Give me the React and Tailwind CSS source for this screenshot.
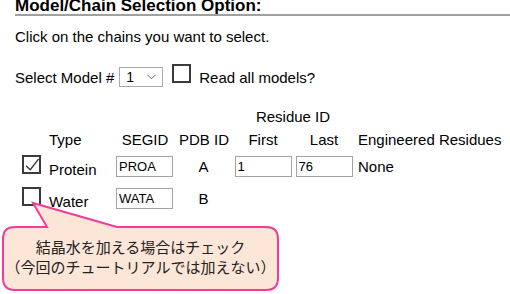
import React from "react";

const cols = "grid grid-cols-[27px_67px_58px_60px_58px_64px_1fr] items-center";

const Box = ({ checked }) => (
  <div className="w-[19px] h-[19px] border-2 border-[#3a3a3a] bg-white">
    {checked && (
      <svg width="15" height="15" viewBox="0 0 15 15" className="block">
        <path d="M2 8.7 L6.3 12.7 L14.6 2" fill="none" stroke="#333" strokeWidth="1.3" />
      </svg>
    )}
  </div>
);

const Field = ({ value }) => (
  <input
    readOnly
    value={value}
    className="w-[57px] h-[21px] border border-[#a3a3a3] bg-white px-[2px] text-[13px] text-black outline-none font-['Liberation_Sans',Arial,sans-serif]"
  />
);

const chains = [
  { type: "Protein", seg: "PROA", pdb: "A", first: "1", last: "76", eng: "None", checked: true },
  { type: "Water", seg: "WATA", pdb: "B", checked: false },
];

export default function App() {
  return (
    <div className="relative w-[510px] h-[294px] overflow-hidden bg-white text-black text-[15px] leading-[17px] font-['Liberation_Sans',Arial,sans-serif]">
      <div className="pl-[15px]">
        <h2 className="mt-[-3px] font-bold text-[17px] leading-[17px] border-b-2 border-[#a0a0a0]">
          Model/Chain Selection Option:
        </h2>
        <p className="mt-[12px]">Click on the chains you want to select.</p>

        <div className="mt-[19px] flex items-start h-[23px]">
          <span className="mt-[5px]">Select Model #</span>
          <div className="ml-[5px] mt-[3px] w-[44px] h-[20px] border border-[#a9a9a9] flex items-center justify-between pl-[6px] pr-[6px] text-[14px]">
            <span>1</span>
            <svg width="9" height="6" viewBox="0 0 9 6">
              <path d="M0.5 0.8 L4.5 4.8 L8.5 0.8" fill="none" stroke="#666" strokeWidth="1" />
            </svg>
          </div>
          <div className="ml-[9px]">
            <Box />
          </div>
          <span className="ml-[8px] mt-[5px]">Read all models?</span>
        </div>
      </div>

      <div className="pl-[22px] mt-[18px]">
        <div className={`${cols} h-[23px]`}>
          <div className="col-start-5 col-span-2 text-center pr-[4px]">Residue ID</div>
        </div>
        <div className={`${cols} h-[22px]`}>
          <div />
          <div>Type</div>
          <div className="text-center">SEGID</div>
          <div className="text-center">PDB ID</div>
          <div className="text-center">First</div>
          <div className="text-center">Last</div>
          <div className="pl-[2px]">Engineered Residues</div>
        </div>
        {chains.map((c, i) => (
          <div key={c.seg} className={`${cols} h-[25px] ${i === 0 ? "mt-[4px]" : "mt-[7px]"}`}>
            <div className="self-start mt-[1px]">
              <Box checked={c.checked} />
            </div>
            <div className="pt-[6px]">{c.type}</div>
            <div>
              <Field value={c.seg} />
            </div>
            <div className="text-center pr-[1px]">{c.pdb}</div>
            <div className="flex justify-center">{c.first && <Field value={c.first} />}</div>
            <div className="flex justify-center">{c.last && <Field value={c.last} />}</div>
            <div className="pl-[2px]">{c.eng}</div>
          </div>
        ))}
      </div>

      <div className="absolute left-0 top-[200px] w-[282px] h-[94px]">
        <svg width="282" height="94" viewBox="0 0 282 94" className="absolute inset-0">
          <path
            d="M15 27 L47 27 L33 3 L117 27 L266 27 Q278 27 278 39 L278 78 Q278 90 266 90 L15 90 Q3 90 3 78 L3 39 Q3 27 15 27 Z"
            fill="#fce6d8"
            stroke="#f23c97"
            strokeWidth="2"
          />
        </svg>
        <div className="relative pl-[3px] w-[278px] pt-[37px] text-center text-[15px] leading-[20px] text-[#222] font-['Noto_Sans_CJK_JP',sans-serif]">
          <div>結晶水を加える場合はチェック</div>
          <div>（今回のチュートリアルでは加えない）</div>
        </div>
      </div>
    </div>
  );
}
